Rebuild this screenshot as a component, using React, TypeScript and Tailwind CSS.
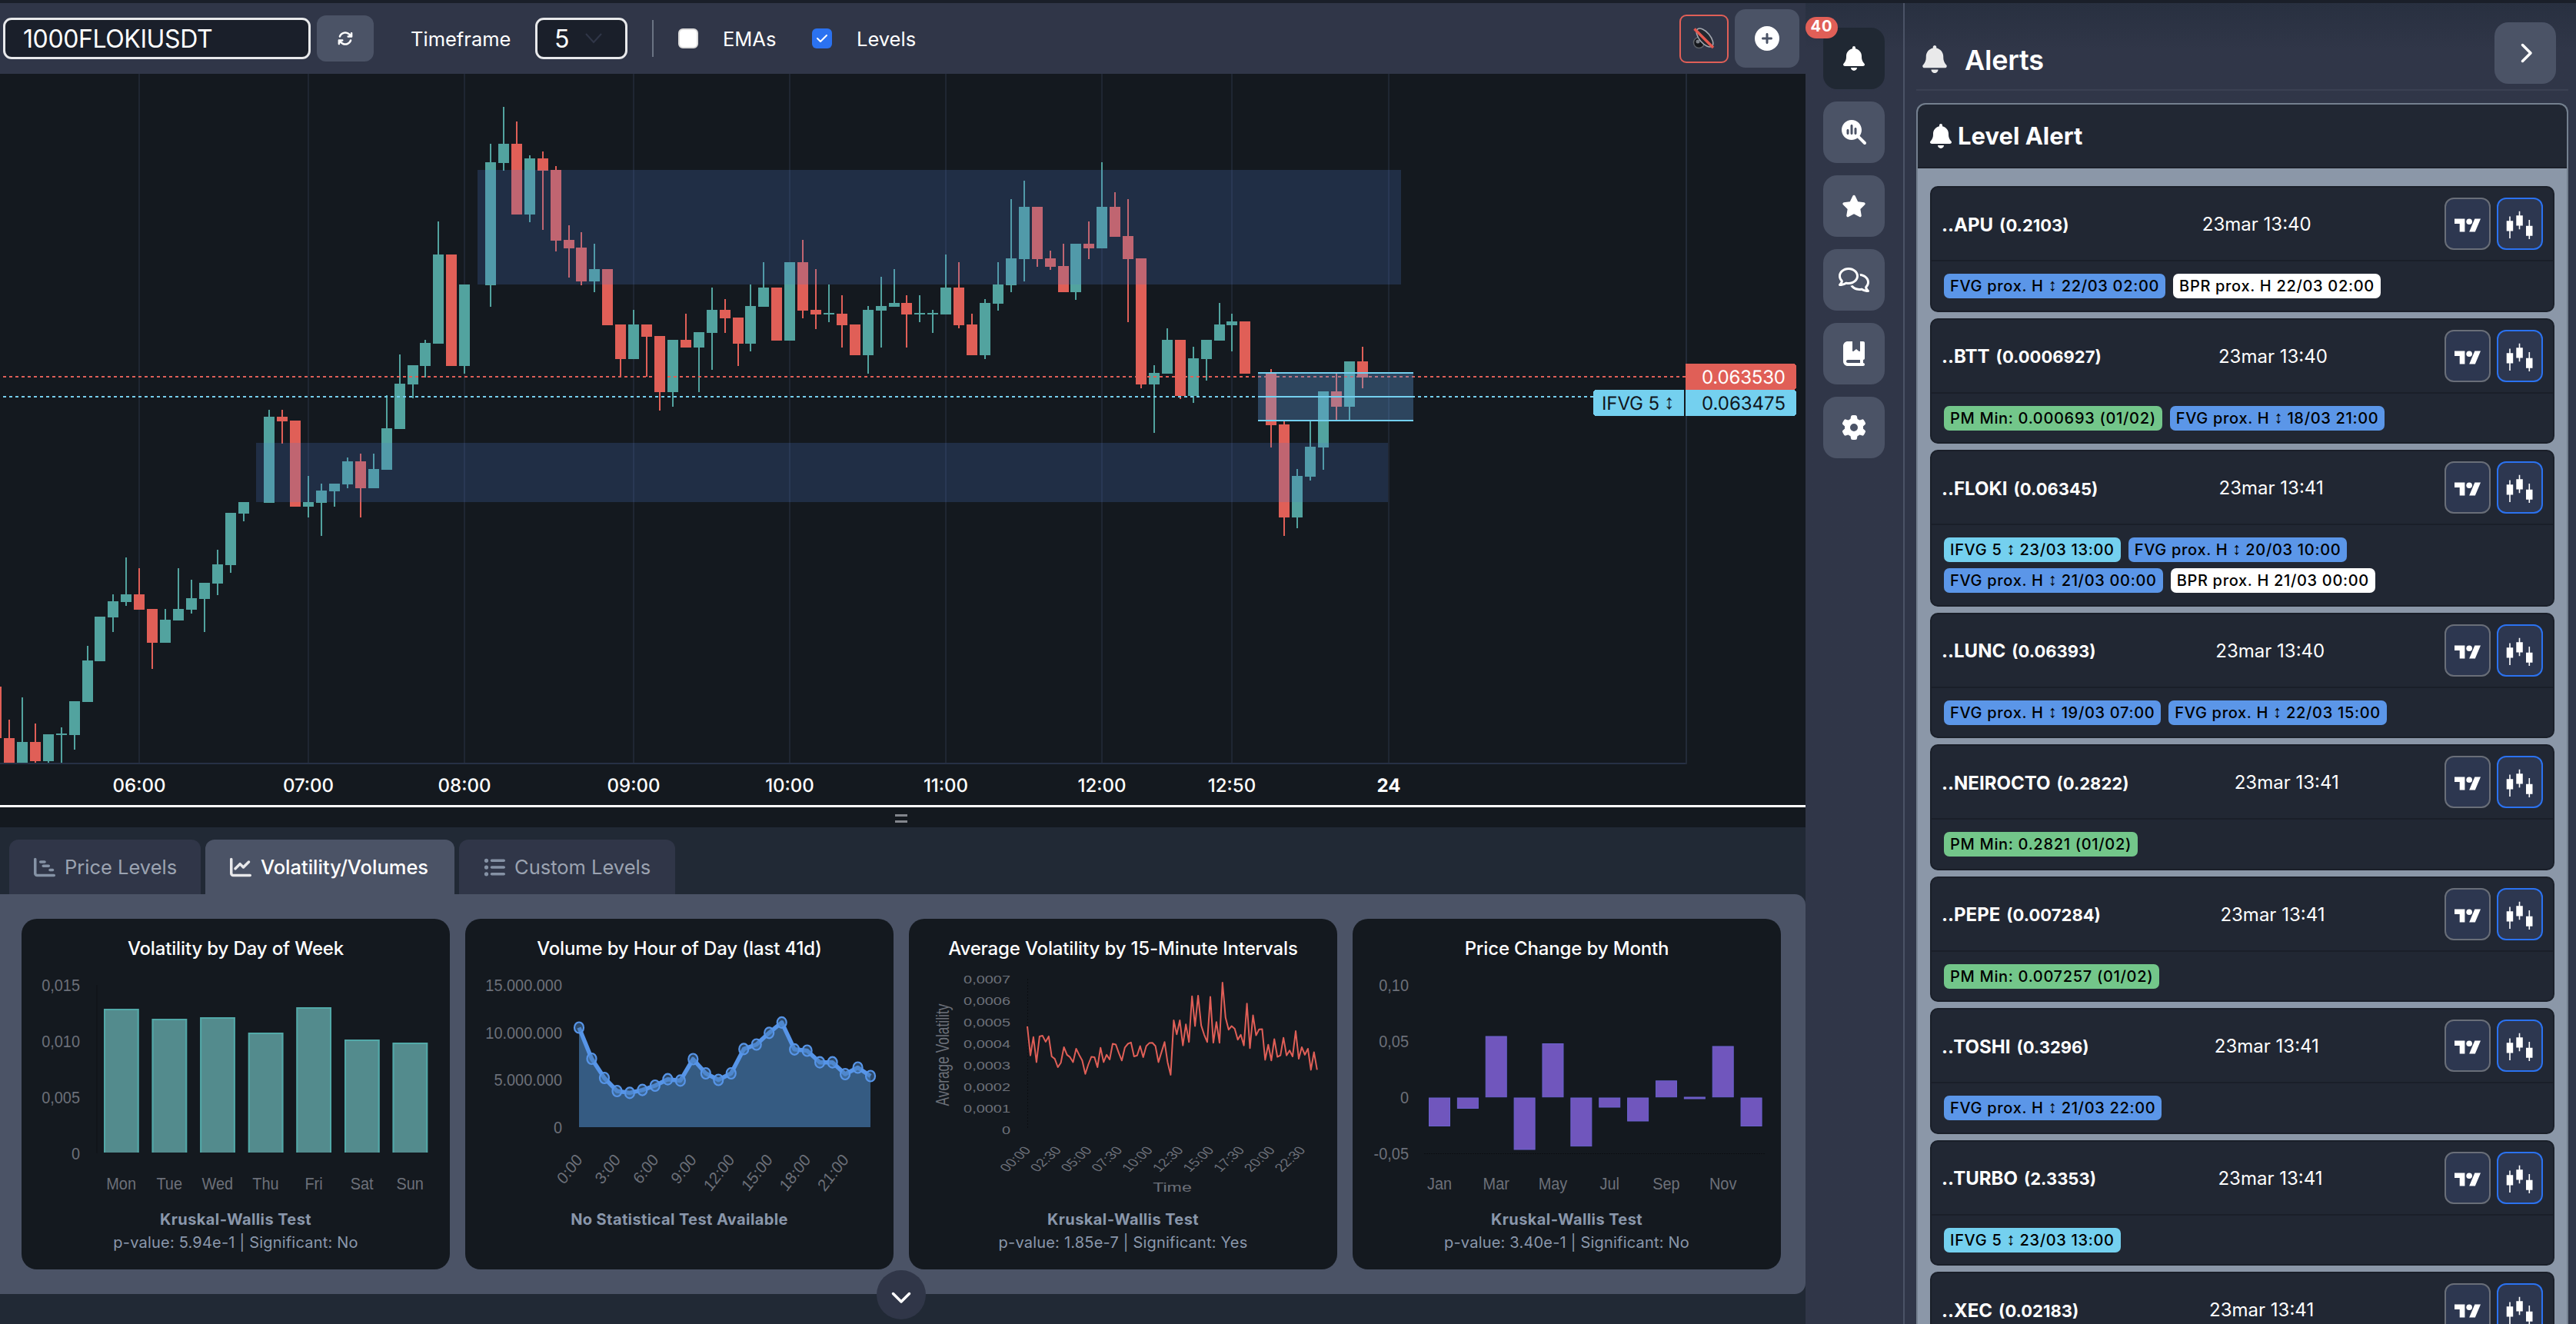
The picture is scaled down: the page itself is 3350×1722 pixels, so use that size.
import React from "react";
import {
  FaArrowsRotate, FaBell, FaBookBookmark, FaChartGantt, FaChartLine, FaCheck, FaChevronDown, FaChevronRight,
  FaCirclePlus, FaGear, FaListUl, FaMagnifyingGlassChart, FaRegComments, FaStar,
} from "react-icons/fa6";

const UP = "#52a39f";
const DOWN = "#e05f57";

// [slot, 1 = up / 0 = down, high, body top, body bottom, low]
const CANDLES: number[][] = [
  [-1, 0, 893, 893, 960, 960], [0, 0, 936, 960, 992, 992], [1, 1, 907, 965, 992, 992], [2, 0, 941, 965, 990, 992],
  [3, 1, 955, 955, 990, 992], [4, 1, 946, 954, 956, 992], [5, 1, 912, 912, 956, 975], [6, 1, 840, 859, 913, 913],
  [7, 1, 802, 802, 860, 860], [8, 1, 773, 782, 803, 822], [9, 1, 725, 773, 783, 788], [10, 0, 739, 773, 793, 793],
  [11, 0, 792, 792, 836, 870], [12, 1, 792, 806, 836, 836], [13, 1, 739, 792, 807, 807], [14, 1, 754, 778, 793, 798],
  [15, 1, 758, 758, 779, 822], [16, 1, 715, 734, 759, 774], [17, 1, 667, 667, 735, 745], [18, 1, 653, 653, 668, 678],
  [20, 1, 533, 542, 654, 654], [21, 0, 533, 542, 548, 577], [22, 0, 547, 547, 659, 659], [23, 1, 619, 653, 659, 673],
  [24, 1, 629, 638, 654, 697], [25, 1, 629, 629, 639, 659], [26, 1, 595, 600, 630, 635], [27, 0, 590, 600, 635, 673],
  [28, 1, 590, 610, 635, 635], [29, 1, 514, 557, 611, 611], [30, 1, 461, 499, 558, 558], [31, 1, 475, 475, 500, 518],
  [32, 1, 442, 446, 476, 491], [33, 1, 288, 331, 447, 447], [34, 0, 331, 331, 476, 476], [35, 1, 370, 370, 476, 486],
  [37, 1, 187, 211, 371, 399], [38, 1, 139, 187, 212, 222], [39, 0, 158, 187, 279, 279], [40, 1, 202, 206, 279, 289],
  [41, 0, 197, 206, 222, 299], [42, 0, 216, 221, 313, 327], [43, 0, 293, 312, 323, 361], [44, 0, 302, 322, 366, 371],
  [45, 1, 317, 350, 366, 380], [46, 0, 350, 350, 423, 423], [47, 0, 422, 422, 467, 490], [48, 1, 403, 422, 467, 467],
  [49, 0, 422, 422, 438, 490], [50, 0, 437, 437, 510, 534], [51, 1, 442, 442, 510, 529], [52, 0, 408, 442, 452, 452],
  [53, 1, 432, 432, 452, 510], [54, 1, 374, 403, 433, 481], [55, 0, 389, 403, 414, 433], [56, 0, 413, 413, 447, 476],
  [57, 1, 370, 398, 447, 457], [58, 1, 341, 374, 399, 399], [59, 0, 374, 374, 443, 443], [60, 1, 341, 341, 443, 443],
  [61, 0, 312, 341, 404, 414], [62, 0, 350, 403, 409, 428], [63, 1, 370, 407, 409, 419], [64, 0, 384, 408, 423, 452],
  [65, 0, 422, 422, 462, 462], [66, 1, 398, 403, 462, 486], [67, 1, 360, 398, 404, 452], [68, 1, 350, 394, 399, 399],
  [69, 0, 384, 394, 409, 452], [70, 1, 384, 407, 409, 419], [71, 1, 403, 407, 409, 433], [72, 1, 331, 374, 409, 409],
  [73, 0, 341, 374, 423, 427], [74, 0, 408, 422, 462, 462], [75, 1, 389, 394, 462, 467], [76, 1, 341, 370, 395, 404],
  [77, 1, 259, 336, 371, 380], [78, 1, 235, 269, 337, 366], [79, 0, 269, 269, 337, 347], [80, 0, 326, 336, 347, 351],
  [81, 0, 317, 346, 380, 380], [82, 1, 317, 317, 380, 390], [83, 0, 288, 317, 323, 337], [84, 1, 211, 269, 323, 323],
  [85, 0, 250, 269, 308, 308], [86, 0, 259, 307, 337, 419], [87, 0, 336, 336, 500, 505], [88, 1, 475, 485, 500, 563],
  [89, 1, 427, 442, 486, 486], [90, 0, 442, 442, 515, 519], [91, 1, 451, 466, 515, 524], [92, 1, 442, 442, 467, 495],
  [93, 1, 394, 422, 443, 443], [94, 1, 408, 418, 423, 457], [95, 0, 418, 418, 486, 486],
  [97, 0, 480, 485, 553, 582], [98, 0, 548, 552, 673, 697], [99, 1, 610, 619, 673, 687], [100, 1, 548, 581, 620, 625],
  [101, 1, 509, 509, 582, 611], [102, 0, 486, 509, 529, 547], [103, 1, 470, 470, 529, 547], [104, 0, 451, 470, 491, 505],
];

const TICKS: [number, string][] = [
  [181, "06:00"], [401, "07:00"], [604, "08:00"], [824, "09:00"], [1027, "10:00"],
  [1230, "11:00"], [1433, "12:00"], [1602, "12:50"], [1806, "24"],
];

function PriceChart() {
  return (
    <svg className="block h-[951px] w-full bg-[#14191f] font-['Inter',sans-serif]" viewBox="0 96 2348 951" shapeRendering="crispEdges">
      {TICKS.map(([x]) => (
        <rect key={x} x={x - 1} y={96} width={2} height={897} fill="#1f2632" />
      ))}
      {CANDLES.map(([slot, up, high, top, bottom, low]) => {
        const cx = Math.round(12 + 16.92 * slot);
        return (
          <g key={slot} fill={up ? UP : DOWN}>
            <rect x={cx - 1} y={high} width={2} height={low - high} />
            <rect x={cx - 7} y={top} width={14} height={bottom - top} />
          </g>
        );
      })}
      <rect x={621} y={221} width={1201} height={149} fill="rgb(80,127,207)" fillOpacity={0.215} />
      <rect x={333} y={576} width={1472} height={77} fill="rgb(80,127,207)" fillOpacity={0.215} />
      <path d="M4 490H2192" stroke={DOWN} strokeWidth={2} strokeDasharray="4 4" />
      <path d="M4 516H2072" stroke="#74d0ef" strokeWidth={2} strokeDasharray="4 4" />
      <rect x={1636} y={484} width={202} height={63} fill="rgb(96,160,226)" fillOpacity={0.33} />
      <path d="M1636 485H1838M1636 516H1838M1636 547H1838" stroke="#74d0ef" strokeWidth={2} />
      <path d="M0 993H2193" stroke="#263045" strokeWidth={2} />
      <path d="M2193 96V994" stroke="#232b38" strokeWidth={2} />
      <path d="M2192 473H2332a4 4 0 0 1 4 4V503a4 4 0 0 1 -4 4H2192Z" fill={DOWN} />
      <path d="M2192 507H2332a4 4 0 0 1 4 4V537a4 4 0 0 1 -4 4H2192Z" fill="#74d0ef" />
      <path d="M2190 507H2076a4 4 0 0 0 -4 4V537a4 4 0 0 0 4 4H2190Z" fill="#74d0ef" />
      <g fontSize={24} textRendering="geometricPrecision">
        <text x={2213} y={499} fill="#fff" textLength={109}>0.063530</text>
        <text x={2213} y={533} fill="#10151b" textLength={109}>0.063475</text>
        <text x={2083} y={533} fill="#10151b" textLength={75}>IFVG 5</text>
        <text x={2164} y={532} fontSize={27} fill="#10151b" className="font-['Liberation_Sans',sans-serif]">↕</text>
        {TICKS.map(([x, label]) => (
          <text key={label} x={x} y={1030} fill="#fff" textAnchor="middle" fontWeight={label === "24" ? 700 : 500}>{label}</text>
        ))}
      </g>
    </svg>
  );
}

const AXIS = "#6c7079";

function Label({ x, y, sy = 0.91, size = 24, anchor = "end", rotate = 0, children }: {
  x: number; y: number; sy?: number; size?: number; anchor?: "start" | "middle" | "end"; rotate?: number; children: React.ReactNode;
}) {
  return (
    <g transform={`translate(${x} ${y}) scale(0.83 ${sy}) rotate(${rotate})`}>
      <text fontSize={size} fill={AXIS} textAnchor={anchor} y={size * 0.355}>{children}</text>
    </g>
  );
}

function VolatilityByDay() {
  const bars: [string, number][] = [["Mon", 1312], ["Tue", 1325], ["Wed", 1323], ["Thu", 1343], ["Fri", 1310], ["Sat", 1352], ["Sun", 1356]];
  return (
    <svg className="block h-[310px] w-full" viewBox="28 1255 557 310">
      {[["0,015", 1281], ["0,010", 1354], ["0,005", 1427], ["0", 1500]].map(([t, y]) => (
        <Label key={t} x={104} y={Number(y)}>{t}</Label>
      ))}
      <path d="M126 1281V1500" stroke="#0f1317" />
      {bars.map(([d, top], i) => (
        <g key={d}>
          <rect x={135 + i * 62.6} y={top} width={45.6} height={1499 - top} fill="#538b8d" />
          <path d={`M${136 + i * 62.6} 1499V${top + 1}h43.6V1499`} fill="none" stroke="#52a9a8" strokeWidth={2} />
          <Label x={157.6 + i * 62.6} y={1539} anchor="middle">{d}</Label>
        </g>
      ))}
    </svg>
  );
}

const VOLUME = [1336.5, 1377, 1402, 1419, 1421.4, 1417.6, 1412, 1403.7, 1405.4, 1377.5, 1396, 1404.5, 1396, 1364.4, 1358.5, 1343.3, 1329.8, 1364.8, 1366.5, 1381.7, 1381.7, 1397, 1388.5, 1399.5];

function VolumeByHour() {
  const pts = VOLUME.map((y, i): [number, number] => [753 + i * 16.48, y]);
  const line = pts.map((p) => p.join(",")).join(" ");
  return (
    <svg className="block h-[310px] w-full" viewBox="605 1255 557 310">
      {[["15.000.000", 1281], ["10.000.000", 1343], ["5.000.000", 1404.5], ["0", 1466]].map(([t, y]) => (
        <Label key={t} x={731} y={Number(y)}>{t}</Label>
      ))}
      <polygon points={`753,1466 ${line} 1132,1466`} fill="#355b82" />
      <polyline points={line} fill="none" stroke="#5795e8" strokeWidth={5.5} strokeLinejoin="round" />
      {pts.map(([x, y]) => (
        <ellipse key={x} cx={x} cy={y} rx={6} ry={7} fill="#4679b4" fillOpacity={0.5} stroke="#5795e8" strokeWidth={2.2} />
      ))}
      {["0:00", "3:00", "6:00", "9:00", "12:00", "15:00", "18:00", "21:00"].map((t, i) => (
        <Label key={t} x={753 + i * 49.44} y={1504} rotate={-50}>{t}</Label>
      ))}
    </svg>
  );
}

const SAMPLES = [
  309, 222, 277, 202, 279, 281, 263, 279, 219, 212, 187, 200, 247, 224, 217, 202, 242, 224, 207, 167, 195, 218, 217, 187, 245, 202, 224, 210,
  257, 255, 229, 207, 246, 257, 261, 219, 222, 250, 217, 250, 259, 260, 250, 202, 232, 262, 202, 164, 327, 285, 327, 252, 315, 262, 399, 310,
  401, 312, 284, 262, 397, 260, 322, 260, 440, 335, 299, 310, 302, 269, 284, 252, 377, 244, 342, 282, 300, 301, 209, 254, 207, 271, 218, 222,
  275, 222, 237, 219, 295, 212, 247, 224, 242, 179, 232, 179,
];

function VolatilityByInterval() {
  const line = SAMPLES.map((s, i) => `${(1336 + i * 3.966).toFixed(1)},${(1469.3 - s * 0.435).toFixed(1)}`).join(" ");
  return (
    <svg className="block h-[310px] w-full" viewBox="1182 1255 557 310">
      {["0", "0,0001", "0,0002", "0,0003", "0,0004", "0,0005", "0,0006", "0,0007"].map((t, i) => (
        <Label key={t} x={1314} y={1469.3 - i * 28} sy={0.62}>{t}</Label>
      ))}
      <path d="M1336.5 1273V1469" stroke="#0b0e12" strokeDasharray="2 2" />
      <polyline points={line} fill="none" stroke={DOWN} strokeWidth={2} strokeLinejoin="round" />
      {["00:00", "02:30", "05:00", "07:30", "10:00", "12:30", "15:00", "17:30", "20:00", "22:30"].map((t, i) => (
        <Label key={t} x={1336 + i * 39.7} y={1493} sy={0.62} rotate={-50}>{t}</Label>
      ))}
      <Label x={1524.5} y={1544} sy={0.62} size={28} anchor="middle">Time</Label>
      <Label x={1226} y={1372} sy={0.62} size={28} anchor="middle" rotate={-90}>Average Volatility</Label>
    </svg>
  );
}

function PriceChangeByMonth() {
  const bars: [number, number][] = [[1428, 1464.5], [1428, 1441.5], [1348, 1426.7], [1428, 1495], [1357.5, 1426.7], [1428, 1490.6], [1428, 1440], [1428, 1458], [1405.8, 1426.7], [1427, 1429], [1361, 1426.7], [1428, 1464.5]];
  return (
    <svg className="block h-[310px] w-full" viewBox="1759 1255 557 310">
      {[["0,10", 1281], ["0,05", 1354.5], ["0", 1427], ["-0,05", 1500]].map(([t, y]) => (
        <Label key={t} x={1832} y={Number(y)}>{t}</Label>
      ))}
      <path d="M1852 1500.5H2296" stroke="#0b0e12" strokeDasharray="2 1" />
      {bars.map(([top, bottom], i) => (
        <rect key={i} x={1858.5 + i * 36.87} y={top} width={27} height={bottom - top} fill="#7056bd" stroke="#6a62cf" strokeWidth={1} />
      ))}
      {["Jan", "Mar", "May", "Jul", "Sep", "Nov"].map((t, i) => (
        <Label key={t} x={1872 + i * 73.74} y={1539} anchor="middle">{t}</Label>
      ))}
    </svg>
  );
}

function StatCard({ title, test, detail, children }: { title: string; test: string; detail?: string; children: React.ReactNode }) {
  return (
    <div className="flex h-[456px] w-[557px] flex-col rounded-[20px] bg-[#14191f] pt-[22px]">
      <h3 className="h-[34px] text-center text-[24px] leading-[34px] font-medium tracking-[-0.15px]">{title}</h3>
      <div className="mt-1 h-[310px] font-['Liberation_Sans',sans-serif]">{children}</div>
      <p className="mt-1.5 h-[30px] text-center text-[20px] leading-[30px] font-bold tracking-[0.4px] text-[#8a97ab]">{test}</p>
      <p className="h-[30px] text-center text-[20px] leading-[30px] tracking-[0.2px] text-[#8a97ab]">{detail}</p>
    </div>
  );
}

const TAG_COLORS = { blue: "bg-[#5b96e8]", white: "bg-white", green: "bg-[#73c68a]", cyan: "bg-[#74d0ef]" };
type Tag = [keyof typeof TAG_COLORS, string];

const ALERTS: { name: string; price: string; time: string; tags: Tag[] }[] = [
  { name: "APU", price: "0.2103", time: "13:40", tags: [["blue", "FVG prox. H ↕ 22/03 02:00"], ["white", "BPR prox. H 22/03 02:00"]] },
  { name: "BTT", price: "0.0006927", time: "13:40", tags: [["green", "PM Min: 0.000693 (01/02)"], ["blue", "FVG prox. H ↕ 18/03 21:00"]] },
  { name: "FLOKI", price: "0.06345", time: "13:41", tags: [["cyan", "IFVG 5 ↕ 23/03 13:00"], ["blue", "FVG prox. H ↕ 20/03 10:00"], ["blue", "FVG prox. H ↕ 21/03 00:00"], ["white", "BPR prox. H 21/03 00:00"]] },
  { name: "LUNC", price: "0.06393", time: "13:40", tags: [["blue", "FVG prox. H ↕ 19/03 07:00"], ["blue", "FVG prox. H ↕ 22/03 15:00"]] },
  { name: "NEIROCTO", price: "0.2822", time: "13:41", tags: [["green", "PM Min: 0.2821 (01/02)"]] },
  { name: "PEPE", price: "0.007284", time: "13:41", tags: [["green", "PM Min: 0.007257 (01/02)"]] },
  { name: "TOSHI", price: "0.3296", time: "13:41", tags: [["blue", "FVG prox. H ↕ 21/03 22:00"]] },
  { name: "TURBO", price: "2.3353", time: "13:41", tags: [["cyan", "IFVG 5 ↕ 23/03 13:00"]] },
  { name: "XEC", price: "0.02183", time: "13:41", tags: [] },
];

function TagLabel({ text }: { text: string }) {
  const [before, after] = text.split("↕");
  if (after === undefined) return <>{text}</>;
  return (
    <span className="whitespace-pre">
      {before}
      <span className="mr-px inline-block w-[10px] -translate-y-px text-center font-['Liberation_Sans',sans-serif] text-[22px] leading-5 tracking-normal">↕</span>
      {after}
    </span>
  );
}

function AlertCard({ name, price, time, tags }: (typeof ALERTS)[number]) {
  return (
    <article className="shrink-0 rounded-[10px] border-2 border-[#1a1f29] bg-[#212733]">
      <header className="flex items-center justify-between border-b-2 border-[#1a1f29] py-[13px] pr-[13px] pl-[13px]">
        <div className="flex items-baseline gap-2 pt-[3px] font-bold">
          <span className="text-[24px]">..{name}</span>
          <span className="text-[22px]">({price})</span>
        </div>
        <span className="pt-0.5 text-[24px]">23mar {time}</span>
        <div className="flex gap-2">
          <button className="flex h-[68px] w-[60px] items-center justify-center rounded-[12px] border-2 border-[#696e78] bg-[#2d3750]">
            <svg viewBox="0 4 35.5 18" className="mt-1 h-[18px] w-[34px]" fill="#fff">
              <path d="M14 22H7V11H0V4h14v18zM28 22h-8l7.500-18h8L28 22z" />
              <circle cx="20" cy="8" r="4" />
            </svg>
          </button>
          <button className="flex h-[68px] w-[60px] items-center justify-center rounded-[12px] border-2 border-[#2b72f0] bg-[#2d3750]">
            <svg viewBox="0 0 36 38" className="mt-1 h-[38px] w-[36px]" fill="#fff">
              <path d="M.7 13.300h8.500v13.300H.7zM4.200 7.500h1.600v28.500H4.200zM13.300 6.300h8.500v13.200h-8.500zM16.700.7h1.600v23.500h-1.600zM26 19.700h8.500v13H26zM29.500 12h1.600v25h-1.600z" />
            </svg>
          </button>
        </div>
      </header>
      <div className="flex flex-wrap gap-x-[10px] gap-y-2 px-4 pt-4 pb-[15.5px]">
        {tags.map(([color, label]) => (
          <span key={label} className={`flex h-8 items-center rounded-[7px] px-2 text-[20px] font-medium tracking-[0.68px] whitespace-nowrap text-black ${TAG_COLORS[color]}`}>
            <TagLabel text={label} />
          </span>
        ))}
      </div>
    </article>
  );
}

function Tab({ icon, label, active = false, width }: { icon: React.ReactNode; label: string; active?: boolean; width: string }) {
  return (
    <button className={`flex h-[71px] items-center gap-3 rounded-t-[12px] pl-8 text-[25.5px] whitespace-nowrap ${width} ${active ? "bg-[#4b5366] font-medium text-white" : "bg-[#303648] text-[#9ba3b1]"}`}>
      {icon}<span className="pt-px">{label}</span>
    </button>
  );
}

function MutedSpeaker() {
  return (
    <svg viewBox="0 0 30 30" className="h-[30px] w-[30px]">
      <circle cx="8.5" cy="20.5" r="7" fill="#15171c" stroke="#5d6168" strokeWidth="1.5" />
      <circle cx="7" cy="19" r="2.5" fill="#7c8088" />
      <ellipse cx="16" cy="14" rx="14.5" ry="7" transform="rotate(50 16 14)" fill="#23272f" stroke="#a4a8b0" strokeWidth="1.6" />
      <path d="M2.5 2.5L27 27" stroke="#e6584f" strokeWidth="3.5" />
    </svg>
  );
}

const NAV = [FaBell, FaMagnifyingGlassChart, FaStar, FaRegComments, FaBookBookmark, FaGear];

export default function App() {
  return (
    <div className="flex h-[1722px] w-[3350px] flex-col overflow-hidden bg-[#303648] font-['Inter',sans-serif] text-white">
      <div className="h-1 shrink-0 bg-[#1a1f29]" />
      <div className="flex min-h-0 flex-1">
        <main className="flex w-[2348px] flex-col bg-[#212935]">
          <div className="flex h-[92px] shrink-0 items-center bg-[#303648] pl-1 text-[25.5px]">
            <div className="flex h-[54px] w-[400px] items-center rounded-[11px] border-[3px] border-[#e8e9eb] bg-[#1a1f2a] pt-0.5 pl-[23px] text-[32px] tracking-[-0.4px]">1000FLOKIUSDT</div>
            <button className="ml-2 flex h-[60px] w-[74px] items-center justify-center rounded-[12px] bg-[#4b5366]"><FaArrowsRotate className="size-5" /></button>
            <span className="ml-12 w-[130px] pt-0.5">Timeframe</span>
            <div className="ml-[32px] flex h-[54px] w-[120px] items-center rounded-[11px] border-[3px] border-[#e8e9eb] bg-[#1a1f2a] pl-[22px] text-[32px]">
              <span className="w-10 pt-0.5">5</span>
              <svg viewBox="0 0 22 14" className="h-[14px] w-[22px]" fill="none" stroke="#303648" strokeWidth="2"><path d="M1 1L11 12L21 1" /></svg>
            </div>
            <div className="ml-8 h-12 w-0.5 bg-[#6a7383]" />
            <div className="ml-8 size-[26px] rounded-[6px] border-2 border-[#dcdcdc] bg-white" />
            <span className="ml-8 w-[69px] pt-0.5">EMAs</span>
            <div className="ml-[47px] flex size-[26px] items-center justify-center rounded-[6px] bg-[#2b72f0]"><FaCheck className="size-4" /></div>
            <span className="ml-8 pt-0.5">Levels</span>
            <div className="ml-auto flex items-center gap-2 pr-2">
              <button className="flex h-[63px] w-16 items-center justify-center rounded-[9px] border-2 border-[#e05f57]"><MutedSpeaker /></button>
              <button className="flex h-[76px] w-[84px] items-center justify-center rounded-[14px] bg-[#4b5366]"><FaCirclePlus className="size-8" /></button>
            </div>
          </div>
          <PriceChart />
          <div className="flex h-[29px] shrink-0 flex-col items-center gap-[5px] border-t-3 border-white bg-[#14191f] pt-[9px]">
            <div className="ml-[-4px] h-[3px] w-4 bg-[#83868d]" />
            <div className="ml-[-4px] h-[3px] w-4 bg-[#83868d]" />
          </div>
          <div className="flex shrink-0 gap-[6px] pt-4 pl-3">
            <Tab width="w-[249px]" icon={<FaChartGantt className="size-7 text-[#8592a5]" />} label="Price Levels" />
            <Tab width="w-[324px]" active icon={<FaChartLine className="size-7 text-[#e8e8ea]" />} label="Volatility/Volumes" />
            <Tab width="w-[281px]" icon={<FaListUl className="size-7 text-[#8592a5]" />} label="Custom Levels" />
          </div>
          <section className="relative flex h-[520px] shrink-0 gap-5 rounded-r-[14px] bg-[#4b5366] pt-8 pl-7">
            <StatCard title="Volatility by Day of Week" test="Kruskal-Wallis Test" detail="p-value: 5.94e-1 | Significant: No"><VolatilityByDay /></StatCard>
            <StatCard title="Volume by Hour of Day (last 41d)" test="No Statistical Test Available"><VolumeByHour /></StatCard>
            <StatCard title="Average Volatility by 15-Minute Intervals" test="Kruskal-Wallis Test" detail="p-value: 1.85e-7 | Significant: Yes"><VolatilityByInterval /></StatCard>
            <StatCard title="Price Change by Month" test="Kruskal-Wallis Test" detail="p-value: 3.40e-1 | Significant: No"><PriceChangeByMonth /></StatCard>
            <button className="absolute bottom-[-33px] left-[1140px] flex size-16 items-center justify-center rounded-full bg-[#303648]"><FaChevronDown className="mt-1 size-7" /></button>
          </section>
        </main>

        <nav className="relative flex w-[127px] shrink-0 flex-col items-center gap-4 bg-linear-to-b from-[#283040] to-[#303648] to-[60px] pt-8 pr-[2px]">
          {NAV.map((Icon, i) => (
            <button key={i} className={`flex size-20 items-center justify-center rounded-[18px] ${i === 0 ? "bg-[#202833]" : "bg-[#4b5366]"}`}><Icon className={i === 3 ? "size-10" : "size-8"} /></button>
          ))}
          <span className="absolute top-[18px] left-0 flex h-7 w-[42px] items-center justify-center rounded-full bg-[#e05f57] pb-1 text-[20px] font-bold tracking-[1px]">40</span>
        </nav>

        <aside className="flex min-w-0 flex-1 flex-col border-l-2 border-[#4b5366] bg-linear-to-b from-[#283040] to-[#303648] to-[60px] pr-[10px] pl-[15px]">
          <div className="flex h-[114px] shrink-0 border-b-2 border-[#3a4153] pr-4 pl-2">
            <FaBell className="mt-[55px] h-9 w-8 shrink-0 text-[#e9e9ea]" />
            <h1 className="mt-[52px] ml-[23px] text-[36px] leading-[44px] font-semibold tracking-[-0.2px]">Alerts</h1>
            <button className="mt-[25px] ml-auto flex size-20 items-center justify-center rounded-[18px] bg-[#4b5366]"><FaChevronRight className="size-7" /></button>
          </div>
          <section className="mt-4 flex min-h-0 flex-1 flex-col rounded-t-[12px] border-2 border-b-0 border-[#74808f] bg-[#8b97a8]">
            <h2 className="flex h-[83px] shrink-0 items-center gap-2 rounded-t-[10px] border-b-2 border-[#1a1f29] bg-[#212733] pl-4 text-[31px] font-bold"><FaBell className="h-8 w-7" /><span className="pt-0.5">Level Alert</span></h2>
            <div className="flex flex-col gap-2 px-4 pt-[23px]">
              {ALERTS.map((a) => <AlertCard key={a.name} {...a} />)}
            </div>
          </section>
        </aside>
      </div>
    </div>
  );
}
